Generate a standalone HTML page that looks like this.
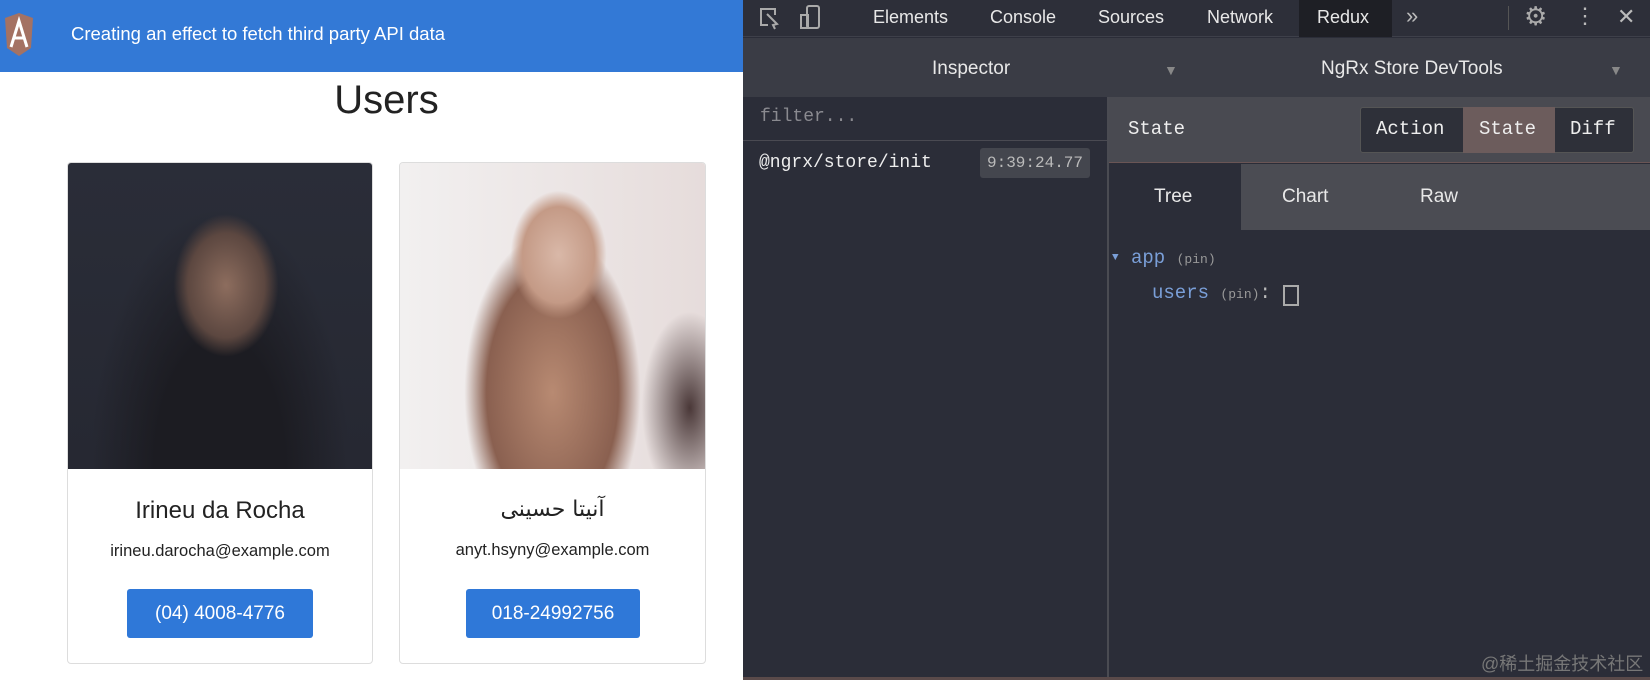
<!DOCTYPE html>
<html><head><meta charset="utf-8"><style>
*{box-sizing:border-box;margin:0;padding:0}
body{width:1650px;height:680px;overflow:hidden;position:relative;background:#fff;font-family:"Liberation Sans","DejaVu Sans",sans-serif}
.a{position:absolute}
.hdr{left:0;top:0;width:743px;height:72px;background:#3379d6}
.card{border:1px solid #ddd;border-radius:4px;background:#fff;overflow:hidden}
.btn{background:#2f78d8;color:#fff;font-size:19px;border-radius:3px;display:flex;align-items:center;justify-content:center}
.ctr{text-align:center;color:#222}
.dt{font-family:"Liberation Sans",sans-serif;color:#e8e8e8}
.mono{font-family:"Liberation Mono",monospace}
</style></head><body>
<div class="a hdr"></div>
<svg class="a" style="left:5px;top:13px" width="28" height="44" viewBox="0 0 28 44"><polygon points="14,0 28,5 26,35 14,43 2,35 0,5" fill="#a47263"/><path d="M6 34 L14 8 L22 34 M9 25 L19 25" stroke="#fff" stroke-width="3" fill="none"/></svg>
<div class="a" style="left:71px;top:23px;color:#fff;font-size:18.5px">Creating an effect to fetch third party API data</div>
<div class="a ctr" style="left:0;width:773px;top:78px;font-size:40px;color:#222">Users</div>

<div class="a card" style="left:67px;top:162px;width:306px;height:502px">
 <div style="height:306px;background:radial-gradient(ellipse 70px 95px at 52% 40%,#8d6d5e 0%,#5c4740 55%,transparent 75%),radial-gradient(ellipse at 50% 100%,#1c1c22 30%,transparent 60%),linear-gradient(#2a2d38,#262832)"></div>
 <div class="ctr" style="margin-top:28px;font-size:24px">Irineu da Rocha</div>
 <div class="ctr" style="margin-top:17px;font-size:16.5px">irineu.darocha@example.com</div>
 <div class="a btn" style="left:59px;top:426px;width:186px;height:49px">(04) 4008-4776</div>
</div>
<div class="a card" style="left:399px;top:162px;width:307px;height:502px">
 <div style="height:306px;background:radial-gradient(ellipse 60px 80px at 52% 30%,#d9b8a8 0%,#c49a86 60%,transparent 80%),radial-gradient(ellipse 110px 200px at 50% 75%,#b88a72 0%,#8a6050 60%,transparent 80%),radial-gradient(ellipse 60px 120px at 95% 80%,#4a3838 0%,transparent 80%),linear-gradient(90deg,#f2f0f0,#e6dcdb)"></div>
 <div class="ctr" style="margin-top:28px;font-size:22px;font-family:'DejaVu Sans',sans-serif" dir="rtl">آنیتا حسینی</div>
 <div class="ctr" style="margin-top:19px;font-size:16.5px">anyt.hsyny@example.com</div>
 <div class="a btn" style="left:66px;top:426px;width:174px;height:49px">018-24992756</div>
</div>

<!-- devtools -->
<div class="a" style="left:743px;top:0;width:907px;height:680px;background:#2b2d38"></div>
<div class="a" style="left:743px;top:0;width:907px;height:37px;background:#2d2f39;border-bottom:1px solid #3e404a"></div>
<svg class="a" style="left:758px;top:5px" width="70" height="26" viewBox="0 0 70 26"><path d="M10 20 H3 V4 H17 V10" stroke="#aaa" stroke-width="2" fill="none"/><path d="M9 9 L19 19 L15 20 L17 24" stroke="#aaa" stroke-width="2" fill="none"/><rect x="49" y="1" width="12" height="22" rx="2" stroke="#aaa" stroke-width="2" fill="none"/><rect x="43" y="10" width="7" height="13" stroke="#aaa" stroke-width="2" fill="none"/></svg>
<div class="a" style="left:1299px;top:0;width:93px;height:37px;background:#1e1f25"></div>
<div class="a dt" style="left:873px;top:7px;font-size:18px">Elements</div>
<div class="a dt" style="left:990px;top:7px;font-size:18px">Console</div>
<div class="a dt" style="left:1098px;top:7px;font-size:18px">Sources</div>
<div class="a dt" style="left:1207px;top:7px;font-size:18px">Network</div>
<div class="a dt" style="left:1317px;top:7px;font-size:18px">Redux</div>
<div class="a dt" style="left:1406px;top:3px;font-size:22px;color:#bbb">»</div>
<div class="a" style="left:1508px;top:6px;width:1px;height:24px;background:#555"></div>
<div class="a dt" style="left:1524px;top:1px;font-size:26px;color:#aaa">⚙</div>
<div class="a dt" style="left:1574px;top:3px;font-size:22px;color:#bbb">⋮</div>
<div class="a dt" style="left:1617px;top:4px;font-size:22px;color:#bbb">✕</div>

<div class="a" style="left:743px;top:38px;width:907px;height:59px;background:#3a3c45"></div>
<div class="a dt" style="left:932px;top:58px;font-size:19px">Inspector</div>
<div class="a dt" style="left:1164px;top:62px;font-size:14px;color:#888">▼</div>
<div class="a dt" style="left:1321px;top:58px;font-size:19px">NgRx Store DevTools</div>
<div class="a dt" style="left:1609px;top:62px;font-size:14px;color:#888">▼</div>

<div class="a" style="left:743px;top:97px;width:364px;height:44px;border-bottom:1px solid #4a4a52"></div>
<div class="a mono" style="left:760px;top:107px;font-size:18px;color:#8a8a90">filter...</div>
<div class="a mono" style="left:759px;top:153px;font-size:18px;color:#eee">@ngrx/store/init</div>
<div class="a mono" style="left:980px;top:148px;width:110px;height:30px;background:#44464e;border-radius:3px;color:#bbb;font-size:16px;text-align:center;line-height:30px">9:39:24.77</div>
<div class="a" style="left:1107px;top:97px;width:2px;height:583px;background:#4a4b52"></div>

<div class="a" style="left:1109px;top:97px;width:541px;height:66px;background:#494a51;border-bottom:1px solid #6a5555"></div>
<div class="a mono" style="left:1128px;top:118px;font-size:19px;color:#eee">State</div>
<div class="a" style="left:1360px;top:107px;width:274px;height:46px;background:#2e3039;border:1px solid #555;border-radius:3px"></div>
<div class="a" style="left:1463px;top:107px;width:92px;height:46px;background:#6c5c5c"></div>
<div class="a mono" style="left:1376px;top:118px;font-size:19px;color:#eee">Action</div>
<div class="a mono" style="left:1479px;top:118px;font-size:19px;color:#eee">State</div>
<div class="a mono" style="left:1570px;top:118px;font-size:19px;color:#eee">Diff</div>

<div class="a" style="left:1241px;top:164px;width:409px;height:66px;background:#4b4c53"></div>
<div class="a dt" style="left:1154px;top:186px;font-size:19px">Tree</div>
<div class="a dt" style="left:1282px;top:186px;font-size:19px">Chart</div>
<div class="a dt" style="left:1420px;top:186px;font-size:19px">Raw</div>

<div class="a mono" style="left:1112px;top:252px;font-size:11px;color:#7a9fd8">▼</div>
<div class="a mono" style="left:1131px;top:247px;font-size:19px;color:#7a9fd8">app <span style="font-size:13px;color:#999">(pin)</span></div>
<div class="a mono" style="left:1152px;top:282px;font-size:19px;color:#7a9fd8">users <span style="font-size:13px;color:#999">(pin)</span><span style="color:#bbb">:</span></div>
<div class="a" style="left:1283px;top:285px;width:16px;height:21px;border:2px solid #aaa"></div>

<div class="a" style="left:1481px;top:650px;font-size:18px;color:#777;font-family:'Liberation Sans','Noto Sans CJK SC',sans-serif">@稀土掘金技术社区</div>
<div class="a" style="left:743px;top:677px;width:907px;height:3px;background:#5a4a4a"></div>
</body></html>
